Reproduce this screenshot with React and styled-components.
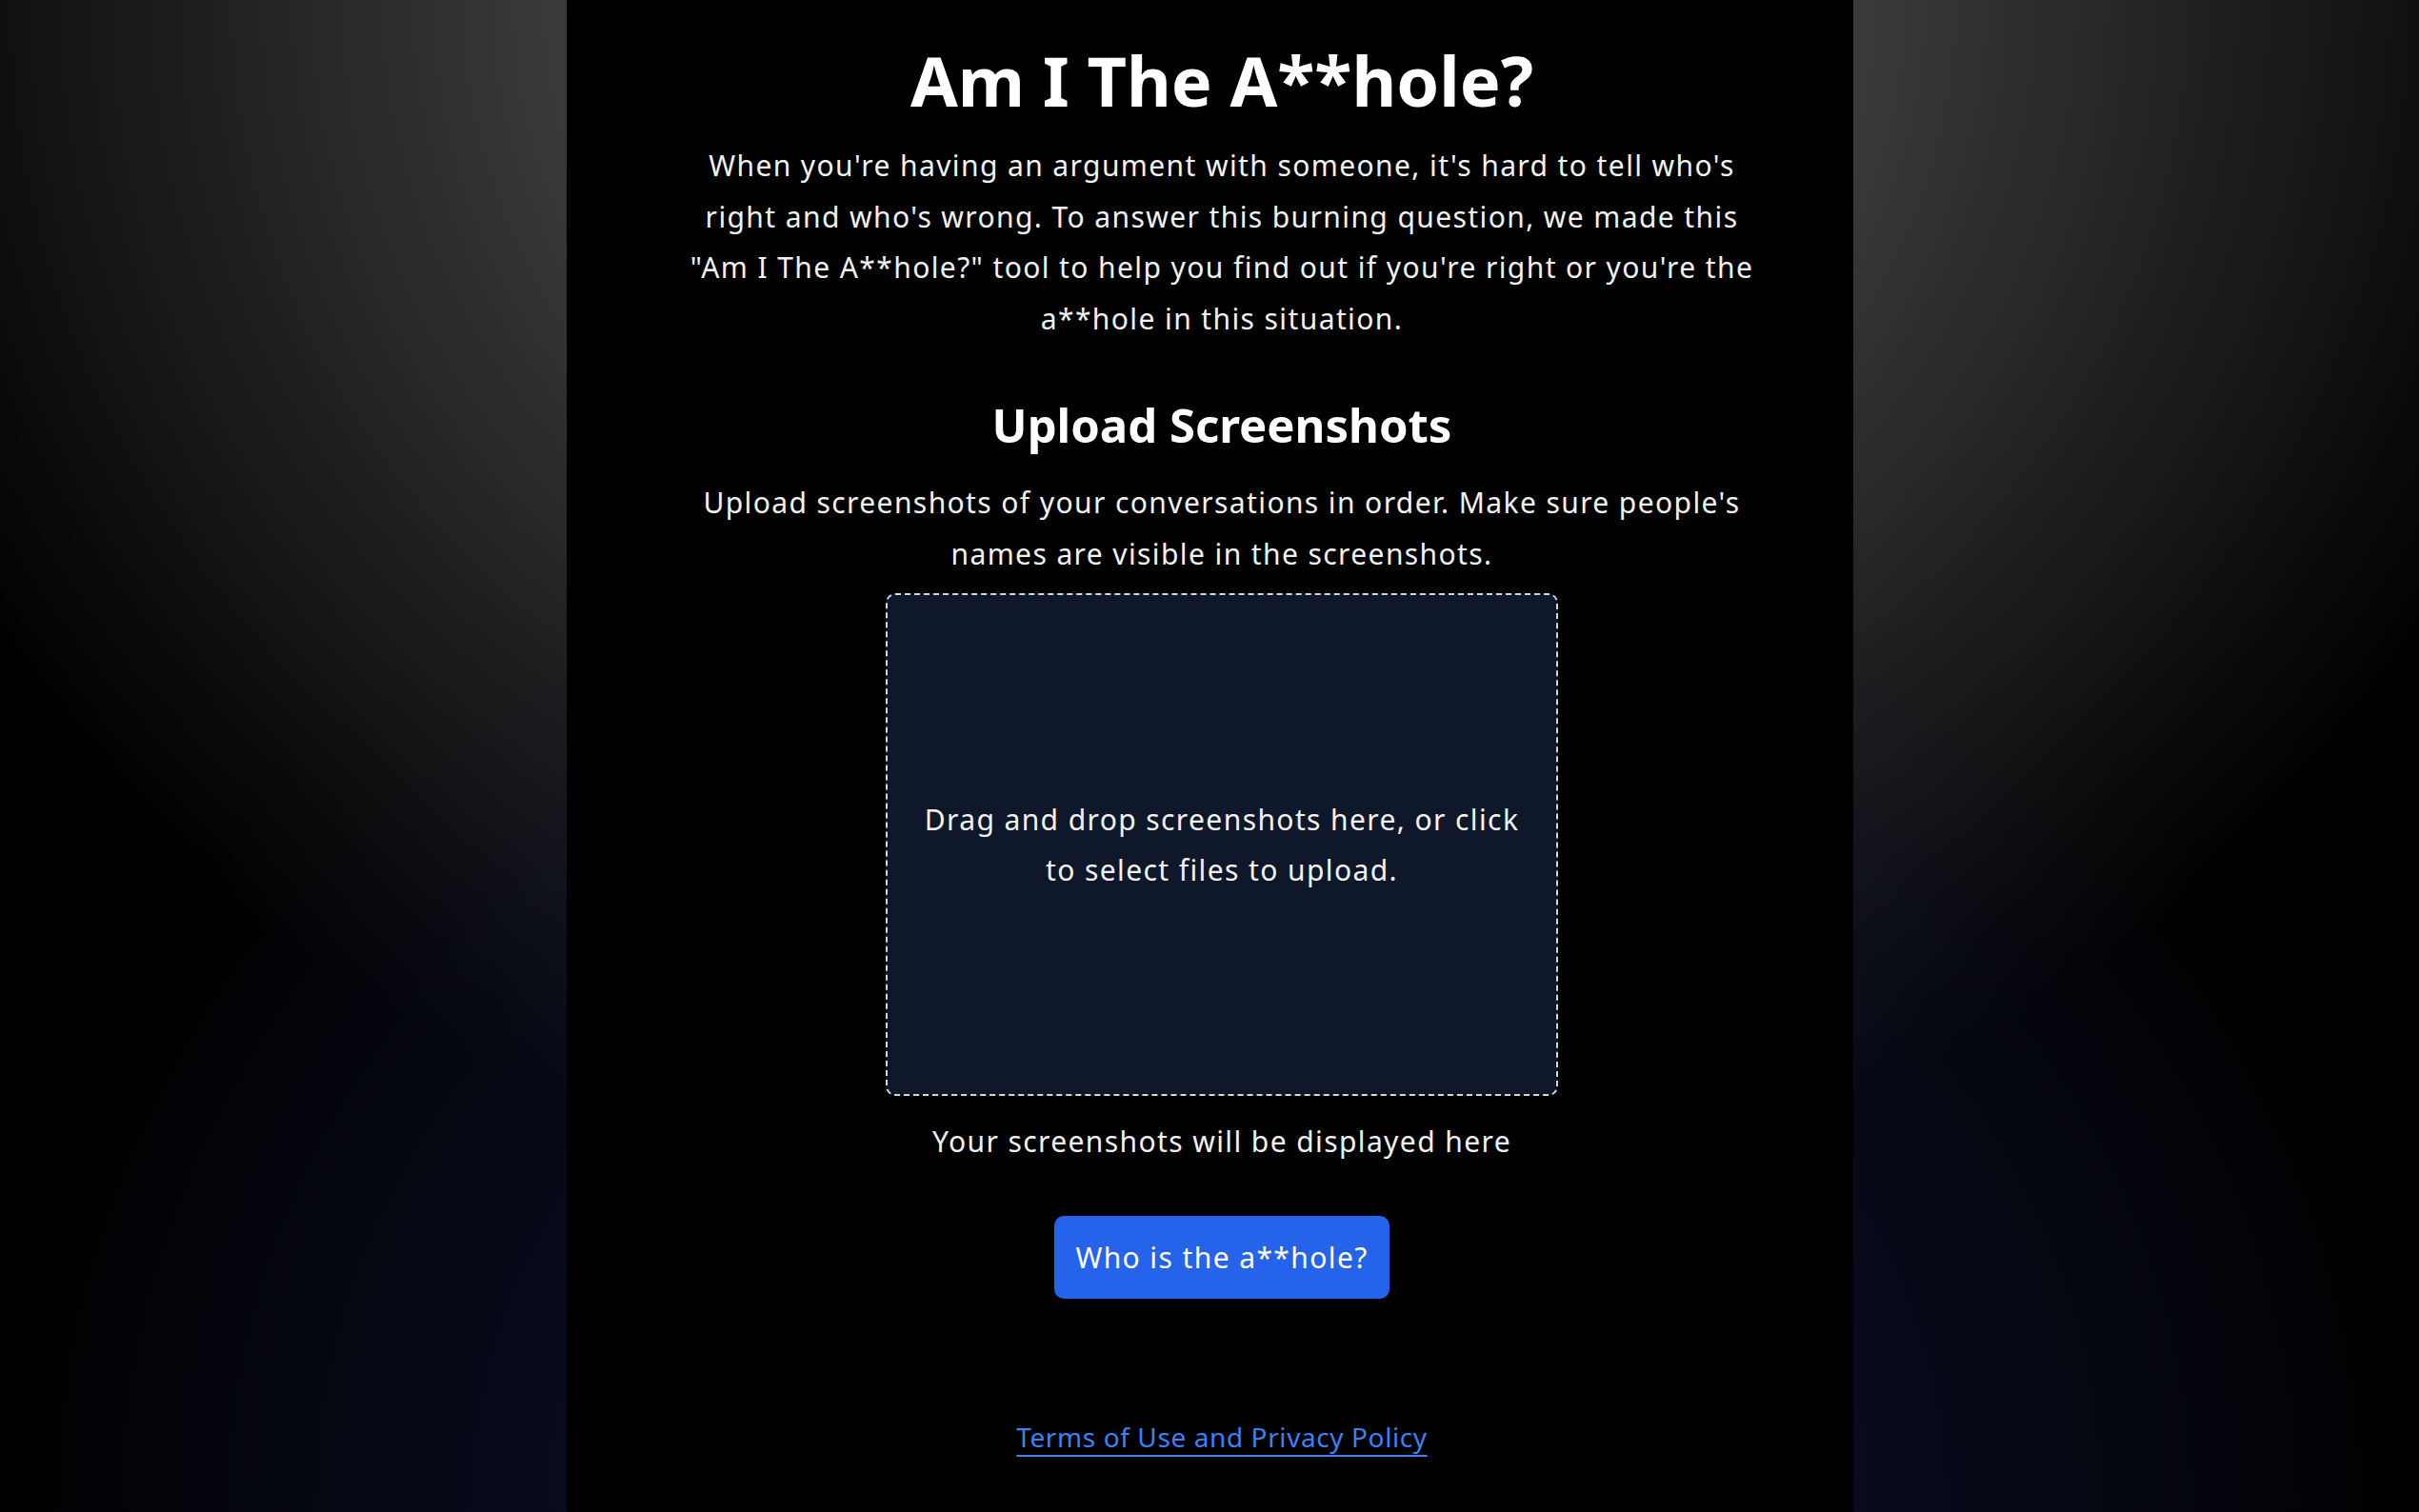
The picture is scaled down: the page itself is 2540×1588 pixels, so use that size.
import React from "react"
import styled, { createGlobalStyle } from "styled-components"

const GlobalStyle = createGlobalStyle`
  html, body {
    margin: 0;
    padding: 0;
    min-height: 100%;
  }
  body {
    font-family: "Noto Sans", "Open Sans", sans-serif;
    color: #f2f2f2;
    background-color: #000;
    background-image:
      radial-gradient(ellipse 1300px 1150px at 50% 100%, rgba(18, 24, 60, 1) 0%, rgba(18, 24, 60, 0) 100%),
      radial-gradient(ellipse 1495px 1303px at 50% 0%, rgba(106, 106, 106, 1) 0%, rgba(106, 106, 106, 0) 100%);
    background-repeat: no-repeat;
    min-height: 1588px;
  }
`

const Page = styled.div`
  display: flex;
  justify-content: center;
  min-height: 1588px;
`

const Column = styled.main`
  width: 1351px;
  background: #000;
  display: flex;
  flex-direction: column;
  align-items: center;
  text-align: center;
  padding: 40px 0 0 26px;
  box-sizing: border-box;
`

const Title = styled.h1`
  margin: 0;
  font-size: 72px;
  line-height: 89px;
  font-weight: 700;
  color: #fff;
`

const Text = styled.p`
  margin: ${p => p.$mt || 0}px 0 0;
  width: ${p => p.$width || 1130}px;
  font-size: 30px;
  line-height: 53.5px;
  letter-spacing: 1.4px;
  color: #f2f2f2;
`

const Heading = styled.h2`
  margin: 55px 0 0;
  font-size: 49px;
  line-height: 60px;
  font-weight: 700;
  color: #fff;
`

const DropZone = styled.div`
  margin-top: 15px;
  width: 706px;
  height: 528px;
  box-sizing: border-box;
  border: 2px dashed #d6d6d6;
  border-radius: 10px;
  background: #0f172a;
  display: flex;
  align-items: center;
  justify-content: center;
  cursor: pointer;
`

const DropText = styled.p`
  margin: 0;
  width: 655px;
  font-size: 30px;
  line-height: 53.5px;
  letter-spacing: 1.4px;
  color: #f2f2f2;
`

const Button = styled.button`
  margin-top: 51px;
  height: 87px;
  padding: 0 22px;
  border: none;
  border-radius: 10px;
  background: #2563eb;
  color: #fff;
  font-family: inherit;
  font-size: 30px;
  letter-spacing: 1.4px;
  cursor: pointer;
`

const FooterLink = styled.a`
  margin-top: 119px;
  font-size: 28px;
  line-height: 53.5px;
  letter-spacing: 0.6px;
  color: #3b82f6;
  text-decoration: underline;
  text-underline-offset: 8px;
  text-decoration-thickness: 2px;
`

const App = () => (
  <>
    <GlobalStyle />
    <Page>
      <Column>
        <Title>Am I The A**hole?</Title>
        <Text $mt={18}>
          When you're having an argument with someone, it's hard to tell who's right and who's wrong. To answer this burning
          question, we made this "Am I The A**hole?" tool to help you find out if you're right or you're the a**hole in this
          situation.
        </Text>
        <Heading>Upload Screenshots</Heading>
        <Text $mt={25}>
          Upload screenshots of your conversations in order. Make sure people's names are visible in the screenshots.
        </Text>
        <DropZone>
          <DropText>Drag and drop screenshots here, or click to select files to upload.</DropText>
        </DropZone>
        <Text $mt={21}>Your screenshots will be displayed here</Text>
        <Button type="button">Who is the a**hole?</Button>
        <FooterLink href="#terms">Terms of Use and Privacy Policy</FooterLink>
      </Column>
    </Page>
  </>
)

export default App
